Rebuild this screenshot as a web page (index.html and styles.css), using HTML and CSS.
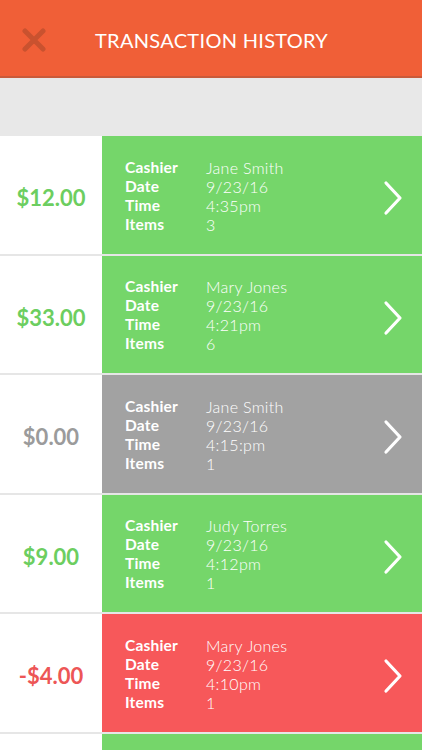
FILE: index.html
```html
<!DOCTYPE html>
<html>
<head>
<meta charset="utf-8">
<link rel="stylesheet" href="styles.css">
</head>
<body>
<div class="app">
  <header class="topbar">
    <svg class="close" width="24" height="24" viewBox="0 0 24 24"><path d="M3 3 L21 21 M21 3 L3 21" stroke="#c9522f" stroke-width="5" stroke-linecap="round" fill="none"/></svg>
    <h1 class="title">TRANSACTION HISTORY</h1>
  </header>
  <div class="band"></div>
  <div class="list">
    <div class="row">
      <div class="amount green">$12.00</div>
      <div class="detail bg-green">
        <div class="info">
          <span class="lbl">Cashier</span><span class="val">Jane Smith</span>
          <span class="lbl">Date</span><span class="val">9/23/16</span>
          <span class="lbl">Time</span><span class="val">4:35pm</span>
          <span class="lbl">Items</span><span class="val">3</span>
        </div>
        <svg class="chev" width="22" height="36" viewBox="0 0 22 36"><path d="M4 3 L18 18 L4 33" stroke="#fff" stroke-width="3.2" stroke-linecap="round" stroke-linejoin="round" fill="none"/></svg>
      </div>
    </div>
    <div class="row">
      <div class="amount green">$33.00</div>
      <div class="detail bg-green">
        <div class="info">
          <span class="lbl">Cashier</span><span class="val">Mary Jones</span>
          <span class="lbl">Date</span><span class="val">9/23/16</span>
          <span class="lbl">Time</span><span class="val">4:21pm</span>
          <span class="lbl">Items</span><span class="val">6</span>
        </div>
        <svg class="chev" width="22" height="36" viewBox="0 0 22 36"><path d="M4 3 L18 18 L4 33" stroke="#fff" stroke-width="3.2" stroke-linecap="round" stroke-linejoin="round" fill="none"/></svg>
      </div>
    </div>
    <div class="row">
      <div class="amount gray">$0.00</div>
      <div class="detail bg-gray">
        <div class="info">
          <span class="lbl">Cashier</span><span class="val">Jane Smith</span>
          <span class="lbl">Date</span><span class="val">9/23/16</span>
          <span class="lbl">Time</span><span class="val">4:15:pm</span>
          <span class="lbl">Items</span><span class="val">1</span>
        </div>
        <svg class="chev" width="22" height="36" viewBox="0 0 22 36"><path d="M4 3 L18 18 L4 33" stroke="#fff" stroke-width="3.2" stroke-linecap="round" stroke-linejoin="round" fill="none"/></svg>
      </div>
    </div>
    <div class="row">
      <div class="amount green">$9.00</div>
      <div class="detail bg-green">
        <div class="info">
          <span class="lbl">Cashier</span><span class="val">Judy Torres</span>
          <span class="lbl">Date</span><span class="val">9/23/16</span>
          <span class="lbl">Time</span><span class="val">4:12pm</span>
          <span class="lbl">Items</span><span class="val">1</span>
        </div>
        <svg class="chev" width="22" height="36" viewBox="0 0 22 36"><path d="M4 3 L18 18 L4 33" stroke="#fff" stroke-width="3.2" stroke-linecap="round" stroke-linejoin="round" fill="none"/></svg>
      </div>
    </div>
    <div class="row">
      <div class="amount red">-$4.00</div>
      <div class="detail bg-red">
        <div class="info">
          <span class="lbl">Cashier</span><span class="val">Mary Jones</span>
          <span class="lbl">Date</span><span class="val">9/23/16</span>
          <span class="lbl">Time</span><span class="val">4:10pm</span>
          <span class="lbl">Items</span><span class="val">1</span>
        </div>
        <svg class="chev" width="22" height="36" viewBox="0 0 22 36"><path d="M4 3 L18 18 L4 33" stroke="#fff" stroke-width="3.2" stroke-linecap="round" stroke-linejoin="round" fill="none"/></svg>
      </div>
    </div>
    <div class="row">
      <div class="amount green"></div>
      <div class="detail bg-green"></div>
    </div>
  </div>
</div>
</body>
</html>
```
FILE: styles.css
```css
* { box-sizing: border-box; margin: 0; padding: 0; }
html, body { width: 422px; height: 750px; overflow: hidden; background: #fff; }
body { font-family: Lato, "Open Sans", sans-serif; }
.app { display: flex; flex-direction: column; height: 750px; overflow: hidden; }
.topbar {
  height: 78px;
  background: #f05f37;
  border-bottom: 2px solid #c95a3a;
  display: flex;
  align-items: center;
  padding-left: 22px;
  padding-top: 4px;
  flex-shrink: 0;
}
.close { flex-shrink: 0; }
.title {
  color: #fff;
  font-size: 20px;
  font-weight: 400;
  letter-spacing: 0.3px;
  margin-left: 49px;
}
.band { height: 58px; background: #e8e8e8; flex-shrink: 0; }
.list { display: flex; flex-direction: column; }
.row {
  display: flex;
  height: 119.5px;
  border-bottom: 2px solid #e6e6e6;
  flex-shrink: 0;
}
.amount {
  width: 102px;
  display: flex;
  align-items: center;
  justify-content: center;
  padding-top: 6px;
  font-size: 22px;
  font-weight: 700;
  background: #fff;
}
.amount.green { color: #6cce60; }
.amount.gray { color: #9b9b9b; }
.amount.red { color: #ed5656; }
.detail {
  flex: 1;
  display: flex;
  align-items: center;
  justify-content: space-between;
  padding-left: 23px;
  padding-right: 18px;
}
.bg-green { background: #75d66a; }
.bg-gray { background: #a2a2a2; }
.bg-red { background: #f7585a; }
.info {
  display: grid;
  grid-template-columns: 81px auto;
  color: #fff;
  font-size: 15.5px;
  line-height: 19px;
  padding-top: 2px;
}
.lbl { font-weight: 700; letter-spacing: 0.2px; }
.val { font-weight: 300; font-size: 16px; letter-spacing: 0.3px; }
.chev { flex-shrink: 0; margin-top: 7px; }
```
